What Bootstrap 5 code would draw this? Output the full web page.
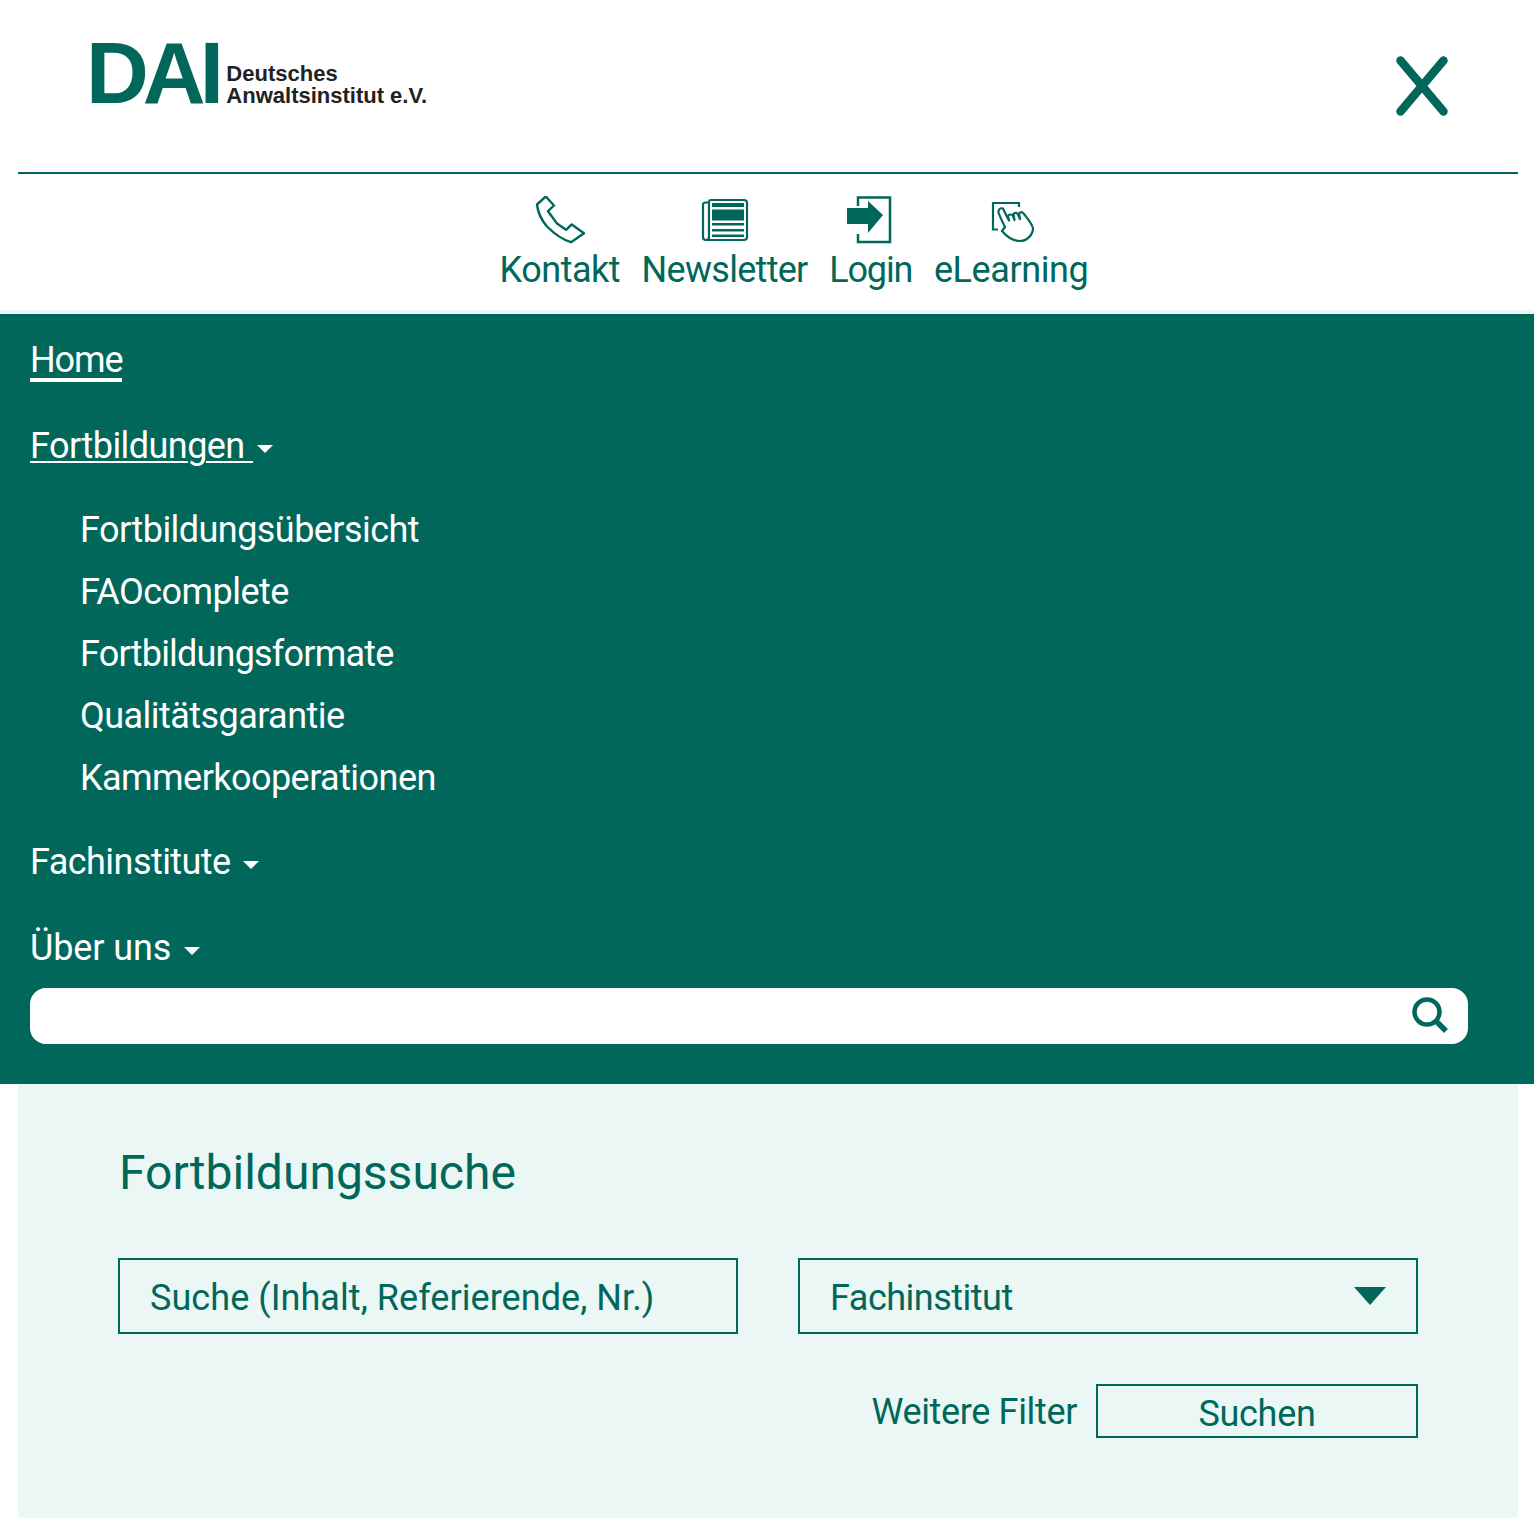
<!DOCTYPE html>
<html lang="de">
<head>
<meta charset="utf-8">
<title>DAI</title>
<link href="https://cdn.jsdelivr.net/npm/bootstrap@5.3.0/dist/css/bootstrap.min.css" rel="stylesheet">
<style>
:root{--dai:#00675a;--dai-light:#eaf7f4}
body{font-family:Roboto,"Liberation Sans",sans-serif;font-size:36px;color:var(--dai);background:#fff;line-height:1.2}
.top-wrap{margin:0 16px 0 18px;height:174px;border-bottom:2px solid var(--dai)}
.brand{padding:43px 0 0 68px}
.brand-dai{font:700 87px/60px "Liberation Sans",sans-serif;letter-spacing:-6px;color:var(--dai)}
.brand-text{font:700 22px/22px "Liberation Sans",sans-serif;color:#222;padding-left:8.500px;margin-bottom:-4px}
.close-x{margin:56px 70px 0 0;width:52px;height:60px}
.quick{height:140px;padding:22px 0 0 54px;gap:21.500px;border-bottom:4px solid var(--dai-light)}
.quick-link{color:var(--dai);text-decoration:none;letter-spacing:-.5px}
.quick-link:nth-child(2){letter-spacing:-.7px}
.quick-link:nth-child(3){letter-spacing:-1.100px}
.quick-link:nth-child(4){letter-spacing:-.4px}
.quick-link:hover{color:var(--dai)}
.quick-link svg{display:block;margin:0 auto;width:60px;height:48px}
.quick-label{display:block;line-height:52px;height:50px}
.main-nav{background:var(--dai);padding:6px 66px 40px 30px;height:770px;letter-spacing:-.55px}
.nav-top{height:80px;padding-top:2px;color:#fff;display:flex;align-items:center;text-decoration:none}
.nav-top+.nav-top{margin-top:6px}
.nav-top:hover{color:#fff}
.nav-home{padding-top:4px;letter-spacing:-1.100px}
.nav-home span{border-bottom:4px solid #fff;line-height:36px}
.nav-label{white-space:pre}
.nav-wide{letter-spacing:-.1px}
.nav-under{text-decoration:underline;text-decoration-thickness:2px;text-underline-offset:3px}
.caret-w{display:inline-block;width:0;height:0;border:8px solid transparent;border-top-color:#fff;border-bottom:0;margin-left:4px;margin-top:4px}
.sub-list{margin:12px 0 14px;padding:0 0 0 50px;list-style:none}
.sub-list li{height:62px;line-height:64px}
.sub-list li:nth-child(3){letter-spacing:-.8px}
.sub-list a{color:#fff;text-decoration:none}
.site-search{height:56px;background:#fff;border-radius:16px}
.site-search input{border:0;background:transparent;height:56px;box-shadow:none}
.site-search svg{width:38px;height:38px;margin-right:19px;flex:none}
.panel{margin:0 16px 0 18px;height:434px;background:var(--dai-light);padding:0 100px}
.panel-title{font-size:48px;font-weight:400;line-height:60px;margin:0;padding:59px 0 55px 1px;color:var(--dai)}
.filters{display:grid;grid-template-columns:620px 620px;gap:60px}
.filters .form-control,.filters .form-select{height:76px;border:2px solid var(--dai);border-radius:0;background-color:transparent;color:var(--dai);font-size:36px;padding:4px 30px 0}
.filters .form-control{letter-spacing:.06px}
.filters .form-control::placeholder{color:var(--dai);opacity:1}
.filters .form-select{letter-spacing:-.5px;background-image:url("data:image/svg+xml,%3Csvg xmlns='http://www.w3.org/2000/svg' viewBox='0 0 32 18'%3E%3Cpath fill='%2300675a' d='M0 0h32L16 18z'/%3E%3C/svg%3E");background-size:32px 18px;background-position:right 30px center}
.actions{margin-top:50px;gap:19px}
.more{color:var(--dai);text-decoration:none;letter-spacing:-.35px;padding-top:4px}
.more:hover{color:var(--dai)}
.btn-find{width:322px;height:54px;border:2px solid var(--dai);border-radius:0;background:transparent;color:var(--dai);font-size:36px;padding:0;line-height:56px;letter-spacing:-.3px}
</style>
</head>
<body>
<header class="top-wrap d-flex justify-content-between align-items-start">
  <a class="brand d-flex align-items-end text-decoration-none" href="#">
    <span class="brand-dai">DAI</span>
    <span class="brand-text">Deutsches<br>Anwaltsinstitut e.V.</span>
  </a>
  <svg class="close-x" viewBox="0 0 52 60" aria-label="Schließen"><path d="M4.500 4.500 47.500 55.500M47.500 4.500 4.500 55.500" stroke="#00675a" stroke-width="8.500" stroke-linecap="round" fill="none"/></svg>
</header>
<nav class="quick d-flex justify-content-center">
  <a class="quick-link text-center" href="#">
    <svg viewBox="0 0 60 48"><path d="M15.700.5 7 8.500C8 17.500 11 23.500 17 30.500 24 37.500 32 43.500 41 46.200L54 37.200 41.700 28.500 36 33.800 27 27.500 18 15.200 24 9.500Z" fill="none" stroke="#00675a" stroke-width="2.400" stroke-linejoin="round"/></svg>
    <span class="quick-label">Kontakt</span>
  </a>
  <a class="quick-link text-center" href="#">
    <svg viewBox="0 0 60 48"><path d="M14 6.500H10.500A2.500 2.500 0 0 0 8 9V41A3 3 0 0 0 11 44H49A3 3 0 0 0 52 41V7A3 3 0 0 0 49 4H16A2 2 0 0 0 14 6V41A3 3 0 0 1 11 44" fill="none" stroke="#00675a" stroke-width="2.200"/><path fill="#00675a" d="M17 7h32v4H17zM17 13.500h32v11H17zM17 27h32v2.500H17zM17 33h32v2.500H17zM17 38.500h32V41H17z"/></svg>
    <span class="quick-label">Newsletter</span>
  </a>
  <a class="quick-link text-center" href="#">
    <svg viewBox="0 0 60 48"><path d="M17 10V1.500H49V46H17V38" fill="none" stroke="#00675a" stroke-width="2.500"/><path fill="#00675a" d="M6 12H27V5L42 19 27 37V28H6Z"/></svg>
    <span class="quick-label">Login</span>
  </a>
  <a class="quick-link text-center" href="#">
    <svg viewBox="0 0 60 48"><g fill="none" stroke="#00675a" stroke-width="2.200" stroke-linecap="round" stroke-linejoin="round"><path d="M17 33.500H12V7H38V11" stroke-linecap="butt" stroke-linejoin="miter"/><path d="M21 35 24 31C22 27 19 21 17.500 16.500 17 14 19 11.500 22 12.500 24 17 26 21 28 24.500L27 20C28 18 31 18 32 20L33.500 24 32.500 18C34 16 36 17 37 18.500L39 23 38 17.500C40 15 42 16.500 43 18 46 22 50 26 52 32 52 39 46 45 39 45 32 45 26 41 21 35Z"/></g></svg>
    <span class="quick-label">eLearning</span>
  </a>
</nav>
<div class="main-nav">
  <a class="nav-top nav-home" href="#"><span>Home</span></a>
  <a class="nav-top" href="#"><span class="nav-label nav-under">Fortbildungen </span><i class="caret-w"></i></a>
  <ul class="sub-list">
    <li><a href="#">Fortbildungsübersicht</a></li>
    <li><a href="#">FAOcomplete</a></li>
    <li><a href="#">Fortbildungsformate</a></li>
    <li><a href="#">Qualitätsgarantie</a></li>
    <li><a href="#">Kammerkooperationen</a></li>
  </ul>
  <a class="nav-top" href="#"><span class="nav-label">Fachinstitute </span><i class="caret-w"></i></a>
  <a class="nav-top" href="#"><span class="nav-label nav-wide">Über uns </span><i class="caret-w"></i></a>
  <form class="site-search d-flex align-items-center">
    <input class="form-control" type="text" aria-label="Suche">
    <svg viewBox="0 0 38 38"><circle cx="16" cy="15" r="12.500" fill="none" stroke="#00675a" stroke-width="4.500"/><path d="M25 24 35 34" stroke="#00675a" stroke-width="5.500"/></svg>
  </form>
</div>
<main class="panel">
  <h1 class="panel-title">Fortbildungssuche</h1>
  <div class="filters">
    <input class="form-control" type="text" placeholder="Suche (Inhalt, Referierende, Nr.)">
    <select class="form-select"><option>Fachinstitut</option></select>
  </div>
  <div class="actions d-flex justify-content-end align-items-center">
    <a class="more" href="#">Weitere Filter</a>
    <button class="btn btn-find" type="button">Suchen</button>
  </div>
</main>
<script src="https://cdn.jsdelivr.net/npm/bootstrap@5.3.0/dist/js/bootstrap.bundle.min.js"></script>
</body>
</html>
